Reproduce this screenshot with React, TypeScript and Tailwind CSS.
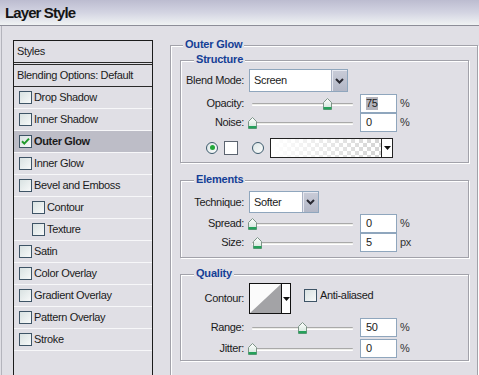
import React from "react";

type StyleRow = { label: string; checked?: boolean; active?: boolean; indent?: boolean };

const styleRows: StyleRow[] = [
  { label: "Drop Shadow" },
  { label: "Inner Shadow" },
  { label: "Outer Glow", checked: true, active: true },
  { label: "Inner Glow" },
  { label: "Bevel and Emboss" },
  { label: "Contour", indent: true },
  { label: "Texture", indent: true },
  { label: "Satin" },
  { label: "Color Overlay" },
  { label: "Gradient Overlay" },
  { label: "Pattern Overlay" },
  { label: "Stroke" },
];

function Check({ checked }: { checked?: boolean }) {
  return (
    <span className="relative inline-block w-[13px] h-[13px] shrink-0 border border-[#3e5466] bg-gradient-to-br from-[#d9e2e2] to-[#f7f9f9]">
      {checked && (
        <svg className="absolute left-0 top-0" width="11" height="11" viewBox="0 0 11 11">
          <path d="M2 5.2 L4.3 7.6 L9 2.6" fill="none" stroke="#1f9a2a" strokeWidth="2" />
        </svg>
      )}
    </span>
  );
}

function Radio({ checked }: { checked?: boolean }) {
  return (
    <span className="relative flex items-center justify-center w-[12px] h-[12px] shrink-0 rounded-full border border-[#3c5a6c] bg-gradient-to-br from-[#dde6e6] to-[#fbfcfc]">
      {checked && <span className="w-[5px] h-[5px] rounded-full bg-[#22a83a]" />}
    </span>
  );
}

function Legend({ children, left }: { children: React.ReactNode; left: string }) {
  return (
    <div
      className={`absolute top-[-8px] ${left} px-[2px] bg-[#e0dfe5] text-[#143e96] font-bold leading-[13px] tracking-[-0.2px]`}
    >
      {children}
    </div>
  );
}

function Thumb() {
  return (
    <svg width="9" height="12" viewBox="0 0 9 12">
      <defs>
        <linearGradient id="tg" x1="0" y1="0" x2="0" y2="1">
          <stop offset="0" stopColor="#ffffff" />
          <stop offset="1" stopColor="#cfe3d8" />
        </linearGradient>
      </defs>
      <path d="M4.5 0.5 L8.5 4.5 L8.5 11.5 L0.5 11.5 L0.5 4.5 Z" fill="url(#tg)" stroke="#7d9488" />
      <rect x="0.5" y="9" width="8" height="2.5" fill="#25a05a" />
    </svg>
  );
}

function Slider({ value }: { value: number }) {
  return (
    <div className="relative w-[108px] h-[19px] shrink-0">
      <div className="absolute left-[3px] top-[9px] w-[101px] h-[3px] border-t border-[#a9a9a9] border-b border-b-white bg-[#ecece8] rounded-[1px]" />
      <div className="absolute top-[4px]" style={{ left: `${value - 1}px` }}>
        <Thumb />
      </div>
    </div>
  );
}

function NumBox({ value, selected, unit }: { value: string; selected?: boolean; unit: string }) {
  return (
    <div className="flex items-center">
      <div className="ml-[3px] w-[37px] h-[19px] bg-white border border-[#8fa6bd] flex items-center pl-[5px]">
        <span className={selected ? "bg-[#b4b4bc]" : ""}>{value}</span>
      </div>
      <span className="ml-[3px] text-[#333]">{unit}</span>
    </div>
  );
}

function Label({ children }: { children: React.ReactNode }) {
  return <div className="w-[63px] shrink-0 text-right">{children}</div>;
}

function SliderRow({ label, value, text, unit, selected, className }: { label: string; value: number; text: string; unit: string; selected?: boolean; className?: string }) {
  return (
    <div className={`flex items-center h-[19px] ${className ?? ""}`}>
      <Label>{label}</Label>
      <div className="ml-[5px] flex items-center">
        <Slider value={value} />
        <NumBox value={text} unit={unit} selected={selected} />
      </div>
    </div>
  );
}

function Chevron() {
  return (
    <svg width="9" height="6" viewBox="0 0 9 6">
      <path d="M1 1 L4.5 4.5 L8 1" fill="none" stroke="#2a2a33" strokeWidth="2" />
    </svg>
  );
}

function Select({ value, width, height }: { value: string; width: string; height: string }) {
  return (
    <div className={`${width} ${height} flex bg-white border border-[#8fa6bd]`}>
      <div className="flex-1 flex items-center pl-[4px]">{value}</div>
      <div className="w-[16px] flex items-center justify-center bg-gradient-to-b from-[#c9ccd8] to-[#b3b7c6] border-l border-[#aab2c4] shadow-[inset_1px_1px_0_#e6e8f0]">
        <Chevron />
      </div>
    </div>
  );
}

function DownTri() {
  return (
    <svg width="7" height="4" viewBox="0 0 7 4">
      <path d="M0 0 L7 0 L3.5 4 Z" fill="#111" />
    </svg>
  );
}

function GradientBox() {
  return (
    <div className="w-[123px] h-[20px] flex border border-[#222] bg-white">
      <svg width="110" height="18" viewBox="0 0 110 18" className="shrink-0">
        <defs>
          <pattern id="chk" width="8" height="8" patternUnits="userSpaceOnUse">
            <rect width="8" height="8" fill="#ffffff" />
            <rect width="4" height="4" fill="#d4d4d4" />
            <rect x="4" y="4" width="4" height="4" fill="#d4d4d4" />
          </pattern>
          <linearGradient id="fade" x1="0" y1="0" x2="1" y2="0">
            <stop offset="0" stopColor="#ffffff" stopOpacity="1" />
            <stop offset="1" stopColor="#ffffff" stopOpacity="0" />
          </linearGradient>
        </defs>
        <rect width="110" height="18" fill="url(#chk)" />
        <rect width="110" height="18" fill="url(#fade)" />
      </svg>
      <div className="flex-1 flex items-center justify-center border-l border-[#222]">
        <DownTri />
      </div>
    </div>
  );
}

function ContourBox() {
  return (
    <div className="w-[42px] h-[31px] flex border border-[#111] bg-white">
      <svg width="31" height="29" viewBox="0 0 31 29" className="shrink-0">
        <rect width="31" height="29" fill="#fbfbfb" />
        <path d="M0 29 L31 0 L31 29 Z" fill="#a3a3a6" />
      </svg>
      <div className="flex-1 flex items-center justify-center border-l border-[#111]">
        <DownTri />
      </div>
    </div>
  );
}

const groupCls =
  "relative border border-[#a2a2aa] shadow-[inset_1px_1px_0_#ffffff,1px_1px_0_#ffffff]";

export default function App() {
  return (
    <div className="w-[479px] h-[375px] overflow-hidden bg-[#e0dfe5] text-[#1b1b1b] text-[11px] leading-[13px] tracking-[-0.35px] font-['Liberation_Sans',Arial,sans-serif]">
      {/* Title bar */}
      <div className="h-[26px] border-b border-[#8d8d98] bg-gradient-to-b from-[#bcbcd0] via-[#d3d4e2] to-[#f0f3f3] flex items-center pl-[5px]">
        <span className="text-[15px] font-bold tracking-[-0.9px] text-[#151515]">
          Layer Style
        </span>
      </div>

      {/* Body */}
      <div className="flex h-[349px] border-l border-[#b4b4bc] ml-[1px]">
        {/* Left list */}
        <div className="ml-[11px] mt-[14px] w-[140px] h-[360px] shrink-0 border-x border-t border-[#1c1c1c] flex flex-col">
          <div className="h-[21px] flex items-center pl-[3px]">Styles</div>
          <div className="h-[3px] border-y border-[#2a2a2a]" />
          <div className="h-[22px] flex items-center pl-[3px] border-b border-[#2a2a2a]">
            Blending Options: Default
          </div>
          {styleRows.map((r) => (
            <div
              key={r.label}
              className={`h-[22px] flex items-center gap-[2px] border-b border-[#f7f7f9] ${
                r.indent ? "pl-[18px]" : "pl-[5px]"
              } ${r.active ? "bg-[#bdbdc7] font-bold" : ""}`}
            >
              <Check checked={r.checked} />
              <span>{r.label}</span>
            </div>
          ))}
        </div>

        {/* Right: Outer Glow */}
        <div className={`${groupCls} mt-[19px] ml-[17px] w-[308px] h-[340px] shrink-0 pt-[14px] pl-[9px] pr-[8px]`}>
          <Legend left="left-[12px]">Outer Glow</Legend>

          {/* Structure */}
          <div className={`${groupCls} pt-[8px] pb-[5px]`}>
            <Legend left="left-[13px]">Structure</Legend>
            <div className="flex items-center h-[23px]">
              <Label>Blend Mode:</Label>
              <div className="ml-[5px]">
                <Select value="Screen" width="w-[99px]" height="h-[23px]" />
              </div>
            </div>
            <SliderRow label="Opacity:" value={75} text="75" unit="%" selected className="mt-[2px]" />
            <SliderRow label="Noise:" value={0} text="0" unit="%" />
            <div className="flex items-center h-[19px] mt-[6px] pl-[25px]">
              <Radio checked />
              <div className="ml-[6px] w-[14px] h-[14px] bg-white border border-[#5c6470]" />
              <div className="ml-[14px]">
                <Radio />
              </div>
              <div className="ml-[6px]">
                <GradientBox />
              </div>
            </div>
          </div>

          {/* Elements */}
          <div className={`${groupCls} mt-[17px] pt-[10px] pb-[5px]`}>
            <Legend left="left-[13px]">Elements</Legend>
            <div className="flex items-center h-[22px]">
              <Label>Technique:</Label>
              <div className="ml-[5px]">
                <Select value="Softer" width="w-[70px]" height="h-[22px]" />
              </div>
            </div>
            <SliderRow label="Spread:" value={0} text="0" unit="%" className="mt-[1px]" />
            <SliderRow label="Size:" value={5} text="5" unit="px" />
          </div>

          {/* Quality */}
          <div className={`${groupCls} mt-[16px] pt-[8px] pb-[2px]`}>
            <Legend left="left-[13px]">Quality</Legend>
            <div className="flex items-center h-[31px]">
              <Label>Contour:</Label>
              <div className="ml-[5px] flex items-center">
                <ContourBox />
                <div className="ml-[13px] flex items-center gap-[3px] -mt-[6px]">
                  <Check />
                  <span>Anti-aliased</span>
                </div>
              </div>
            </div>
            <SliderRow label="Range:" value={50} text="50" unit="%" className="mt-[4px]" />
            <SliderRow label="Jitter:" value={0} text="0" unit="%" className="mt-[2px]" />
          </div>
        </div>
      </div>
    </div>
  );
}
